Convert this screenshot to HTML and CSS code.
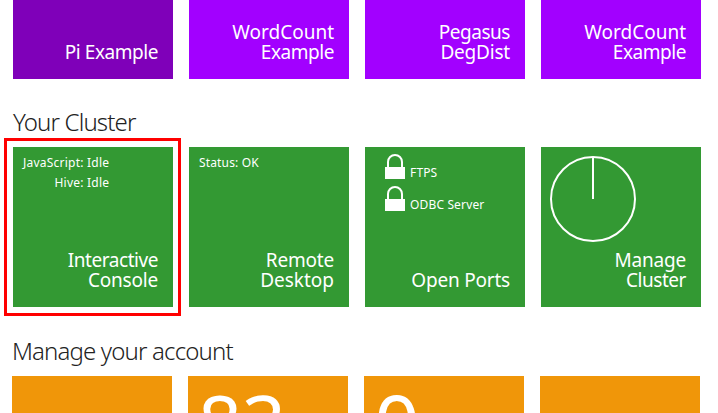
FILE: index.html
```html
<!DOCTYPE html>
<html lang="en">
<head>
<meta charset="utf-8">
<title>Cluster dashboard</title>
<link rel="stylesheet" href="styles.css">
</head>
<body>
<main class="dashboard">
  <section class="tiles samples">
    <a class="tile purple-dark"><span class="title"><span class="line tight">Pi Example</span></span></a>
    <a class="tile purple"><span class="title"><span class="line wide">WordCount</span><span class="line tight">Example</span></span></a>
    <a class="tile purple"><span class="title"><span class="line tight">Pegasus</span><span class="line">DegDist</span></span></a>
    <a class="tile purple"><span class="title"><span class="line wide">WordCount</span><span class="line tight">Example</span></span></a>
  </section>
  <h2 class="heading cluster-heading">Your Cluster</h2>
  <section class="tiles cluster">
    <a class="tile green selected">
      <span class="status console-status">JavaScript: Idle<br>Hive: Idle</span>
      <span class="title"><span class="line tight">Interactive</span><span class="line">Console</span></span>
    </a>
    <a class="tile green">
      <span class="status machine-status">Status: OK</span>
      <span class="title"><span class="line">Remote</span><span class="line wide">Desktop</span></span>
    </a>
    <a class="tile green">
      <span class="ports">
        <span class="port"><svg class="lock" viewBox="0 0 20 25"><path d="M3 14V8a7 7 0 0 1 14 0v6" fill="none" stroke="#fff" stroke-width="2"/><path d="M0 13h20v12H0z" fill="#fff"/></svg><span class="port-name">FTPS</span></span>
        <span class="port"><svg class="lock" viewBox="0 0 20 25"><path d="M3 14V8a7 7 0 0 1 14 0v6" fill="none" stroke="#fff" stroke-width="2"/><path d="M0 13h20v12H0z" fill="#fff"/></svg><span class="port-name">ODBC Server</span></span>
      </span>
      <span class="title"><span class="line">Open Ports</span></span>
    </a>
    <a class="tile green">
      <svg class="dial" viewBox="0 0 86 86" fill="none" stroke="#fff" stroke-width="2"><circle cx="43" cy="43" r="42"/><path d="M43 1v42"/></svg>
      <span class="title"><span class="line">Manage</span><span class="line tight">Cluster</span></span>
    </a>
  </section>
  <h2 class="heading account-heading">Manage your account</h2>
  <section class="tiles account">
    <a class="tile orange"></a>
    <a class="tile orange"><span class="count">83</span></a>
    <a class="tile orange"><span class="count zero">0</span></a>
    <a class="tile orange"></a>
  </section>
</main>
</body>
</html>
```
FILE: styles.css
```css
* { box-sizing: border-box; }
body {
  margin: 0;
  background: #fff;
  color: #fff;
  font-family: "Noto Sans", "Open Sans", sans-serif;
  overflow: hidden;
}
.dashboard { width: 718px; height: 413px; overflow: hidden; }
.tiles {
  display: grid;
  grid-template-columns: repeat(4, 160px);
  gap: 16px;
  padding-left: 13px;
}
.tile {
  display: flex;
  flex-direction: column;
  height: 160px;
  padding: 6px 15px 17px 10px;
}
.samples .tile { height: 79px; }
.purple-dark { background: #7f00b9; }
.purple { background: #a200ff; }
.green { background: #339933; }
.orange { background: #f09609; }
.title {
  display: flex;
  flex-direction: column;
  align-items: flex-end;
  margin-top: auto;
  font-size: 19px;
  line-height: 20px;
  white-space: nowrap;
}
.line { letter-spacing: -0.2px; }
.tight { letter-spacing: -0.45px; }
.wide { letter-spacing: 0; }
.heading {
  margin: 0;
  height: 32px;
  color: #222;
  font-size: 24px;
  line-height: 32px;
  font-weight: 300;
  letter-spacing: -0.85px;
  white-space: nowrap;
}
.cluster-heading { margin: 27px 0 9px 13px; }
.account-heading { margin: 28px 0 9px 12px; }
.selected { position: relative; }
.selected::after {
  content: "";
  position: absolute;
  inset: -9px -8px -9px -9px;
  border: 3px solid #f00;
}
.status { font-size: 12px; line-height: 20px; white-space: nowrap; }
.console-status { align-self: flex-start; text-align: right; letter-spacing: 0.23px; }
.machine-status { letter-spacing: 0.15px; }
.ports { display: flex; flex-direction: column; gap: 7px; padding: 1px 0 0 10px; }
.port { display: flex; height: 25px; gap: 5px; font-size: 12px; letter-spacing: 0.15px; }
.lock { width: 20px; height: 25px; }
.port-name { padding-top: 9px; line-height: 20px; white-space: nowrap; }
.dial { width: 86px; height: 86px; margin: 3px 0 0 -1px; }
.account { padding-left: 12px; }
.account .tile { height: 37px; overflow: hidden; padding-top: 0; }
.count { font-size: 77px; line-height: 92px; }
.zero { font-size: 80px; }
```
